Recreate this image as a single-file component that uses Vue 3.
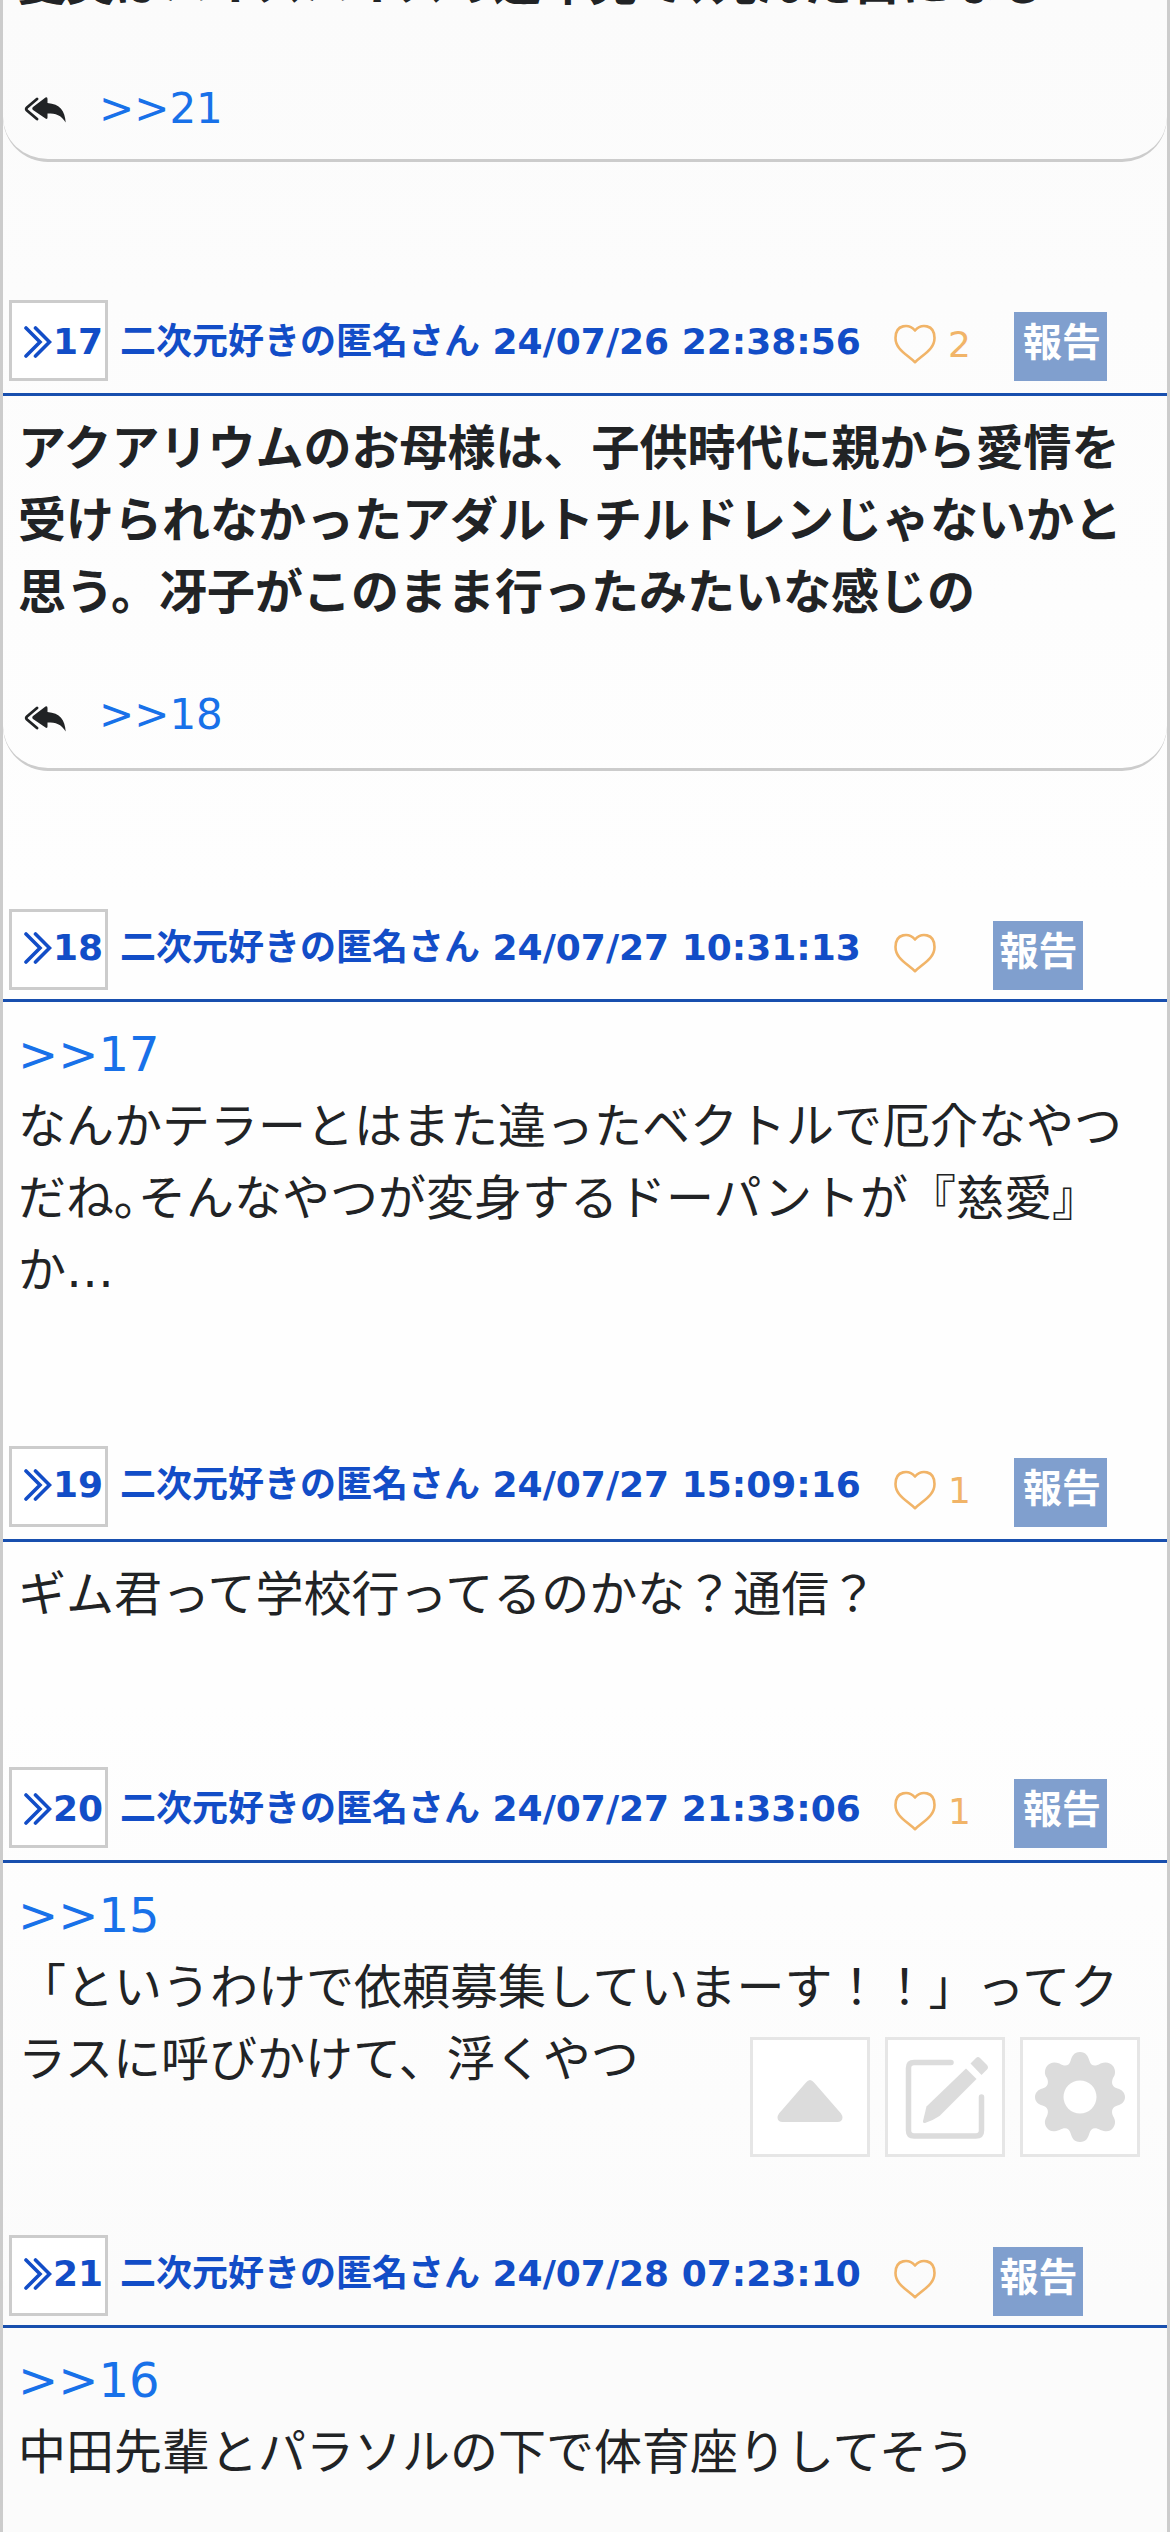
<script setup>
const posts = [
  { no: 17, date: '24/07/26 22:38:56', likes: 2, bold: true, low: true, lines: ['アクアリウムのお母様は、子供時代に親から愛情を', '受けられなかったアダルトチルドレンじゃないかと', '思う。冴子がこのまま行ったみたいな感じの'], reply: '>>18' },
  { no: 18, date: '24/07/27 10:31:13', likes: 0, anchor: '>>17', lines: ['なんかテラーとはまた違ったベクトルで厄介なやつ', 'だね｡そんなやつが変身するドーパントが『慈愛』', 'か…'] },
  { no: 19, date: '24/07/27 15:09:16', likes: 1, tight: true, lines: ['ギム君って学校行ってるのかな？通信？'] },
  { no: 20, date: '24/07/27 21:33:06', likes: 1, low: true, anchor: '>>15', lines: ['「というわけで依頼募集していまーす！！」ってク', 'ラスに呼びかけて、浮くやつ'] },
  { no: 21, date: '24/07/28 07:23:10', likes: 0, anchor: '>>16', lines: ['中田先輩とパラソルの下で体育座りしてそう'] },
]
</script>

<template>
  <main class="thread">
    <section class="card card--first">
      <p class="line bold">夏美はハイスハイスの近年見て､死んだ目になる</p>
      <div class="reply">
        <svg class="reply-icon" viewBox="0 0 42 26"><path d="M13 2 3 10.5Q1.500 12 3 13.500L13 22" fill="none" stroke="currentColor" stroke-width="2.800" stroke-linecap="round" /><path d="M9 10 21.500.6Q23.500-.3 23.500 2V6C36 7 41 14 41.700 25.500 37 18 32 16.500 23.500 16.500V20.500Q23.500 22.600 21.500 21.500L9 13Q7.500 11.500 9 10Z" fill="currentColor" /></svg>
        <a class="link">&gt;&gt;21</a>
      </div>
    </section>

    <article v-for="p in posts" :key="p.no">
      <header class="head" :class="{ low: p.low, liked: p.likes }">
        <div class="number">
          <svg class="chevrons" viewBox="0 0 28 32"><path d="M2 2 16 16 2 30M11.500 2 25.500 16 11.500 30" fill="none" stroke="currentColor" stroke-width="3.600" stroke-linecap="round" /></svg>
          <span>{{ p.no }}</span>
        </div>
        <div class="meta">二次元好きの匿名さん {{ p.date }}</div>
        <svg class="heart" viewBox="0 0 42 40"><path d="M21 6.500C15-.5 1.500 0 1.500 14 1.500 25 12 30 21 38.200 30 30 40.500 25 40.500 14 40.500 0 27-.5 21 6.500Z" fill="none" stroke="currentColor" stroke-width="2.600" stroke-linejoin="round" /></svg>
        <span v-if="p.likes" class="count">{{ p.likes }}</span>
        <button class="report">報告</button>
      </header>
      <div class="body" :class="{ card: p.reply, tight: p.tight }">
        <a v-if="p.anchor" class="line link">{{ p.anchor }}</a>
        <p v-for="l in p.lines" :key="l" class="line" :class="{ bold: p.bold }">{{ l }}</p>
        <div v-if="p.reply" class="reply">
          <svg class="reply-icon" viewBox="0 0 42 26"><path d="M13 2 3 10.500Q1.500 12 3 13.500L13 22" fill="none" stroke="currentColor" stroke-width="2.800" stroke-linecap="round" /><path d="M9 10 21.500.6Q23.500-.3 23.500 2V6C36 7 41 14 41.700 25.500 37 18 32 16.500 23.500 16.500V20.500Q23.500 22.600 21.500 21.500L9 13Q7.500 11.500 9 10Z" fill="currentColor" /></svg>
          <a class="link">{{ p.reply }}</a>
        </div>
      </div>
    </article>

    <nav class="tools">
      <button class="tool"><svg viewBox="0 0 114 114"><path d="M53 42.500Q57 37.500 61 42.500L88 73.500Q91 78 88 81 86.500 82 84.500 82H29.500Q27.500 82 26 81 23 78 26 73.500Z" fill="currentColor" /></svg></button>
      <button class="tool"><svg viewBox="0 0 114 114"><path d="M63 22.500H26Q20.500 22.500 20.500 28V90.500Q20.500 96 26 96H88Q93.500 96 93.500 90.500V57" fill="none" stroke="currentColor" stroke-width="5.500" stroke-linecap="round" /><path d="M78 28.500 88.500 39 51.500 76Q44 81 37 83 34.500 83.500 35 81L38.500 66.500Z" fill="currentColor" /><path d="M82.500 23.500 88 18Q90 16 92 18L99 25Q101 27.500 99 29.500L93.500 35Z" fill="currentColor" /></svg></button>
      <button class="tool"><svg viewBox="0 0 114 114"><path fill-rule="evenodd" fill="currentColor" d="M57 12C63 12 65 16 66.500 21 68 26 72 27 77.500 23.500 83 21.500 87 22.500 90 26 93 30 92.500 35 90 38 88 43 89 47 94.500 48.500 99 49.500 102 53 102 57 102 61 99 64.500 94.500 65.500 89 67 88 71 90 76 92.500 80 93 84 90 88 87 92 83 92 77.500 90 72 87 68 88 66.500 93 65 98 63 102 57 102 51 102 49 98 47.500 93 46 88 42 87 36.500 90 31 92 27 92 24 88 21 84 21.500 80 24 76 26 71 25 67 19.500 65.500 15 64.500 12 61 12 57 12 53 15 49.500 19.500 48.500 25 47 26 43 24 38 21.500 35 21 30 24 26 27 22.500 31 21.500 36.500 23.500 42 27 46 26 47.500 21 49 16 51 12 57 12ZM57 40.500A16.500 16.500 0 1 0 57 73.500 16.500 16.500 0 1 0 57 40.500Z" /></svg></button>
    </nav>
  </main>
</template>

<style>
body { margin: 0; }
</style>

<style scoped>
* { box-sizing: border-box; }
.thread {
  position: relative;
  height: 2532px;
  overflow: hidden;
  border: solid #ccc;
  border-width: 0 3px;
  background: linear-gradient(#fbfbfb, #fefefe 900px, #fefefe 1700px, #fbfbfb 2300px);
  color: #212325;
  font: 48px/72px "DejaVu Sans", "Noto Sans CJK JP", sans-serif;
}
.line { display: block; margin: 0; white-space: nowrap; }
.bold { font-weight: 700; }
.link { color: #1871e9; }
.card {
  border-bottom: 3px solid #ccc;
  border-radius: 0 0 45px 45px;
}
.card--first {
  display: flex;
  flex-direction: column;
  justify-content: flex-end;
  height: 162px;
  margin-bottom: 138px;
  padding: 0 15px 19px;
}
.body { padding: 16px 15px 140px; }
.body.tight { padding-bottom: 137px; }
.body.card { height: 375px; margin-bottom: 138px; padding-bottom: 0; }
.reply {
  display: flex;
  align-items: center;
  gap: 33px;
  height: 63px;
  margin-top: 55px;
  padding-left: 6px;
  font-size: 42px;
  line-height: 63px;
}
.card--first .reply { margin-top: 58px; }
.reply-icon { width: 42px; height: 26px; margin-top: 8px; }
.card--first .reply-icon { margin-top: 3px; }
.head {
  --drop: 0px;
  display: flex;
  align-items: flex-start;
  height: 93px;
  padding-left: 6px;
  border-bottom: 3px solid #184fae;
  color: #124dc7;
  font-size: 36px;
  line-height: 54px;
  font-weight: 700;
  white-space: nowrap;
}
.liked { height: 96px; }
.low { --drop: 3px; }
.number {
  display: flex;
  width: 99px;
  height: 81px;
  margin-right: 12px;
  padding: calc(9px + var(--drop)) 0 0 12px;
  border: 3px solid #ccc;
  background: #fff;
}
.chevrons { flex: none; width: 28px; height: 32px; margin: 11px 1px 0 0; }
.meta { width: 774px; padding-top: calc(12px + var(--drop)); }
.heart { flex: none; width: 42px; height: 40px; margin-top: 24px; color: #f1b468; }
.count {
  width: 23px;
  margin: 18px 0 0 12px;
  color: #f1b468;
  font-weight: 400;
}
.report {
  width: 90px;
  height: 69px;
  margin: 12px 0 0 57px;
  padding: 0 0 8px 1px;
  border: 0;
  background: #809fce;
  color: #fff;
  font: 700 39px/58px "DejaVu Sans", "Noto Sans CJK JP", sans-serif;
}
.count + .report { width: 93px; margin-left: 43px; padding-left: 3px; }
.tools {
  position: absolute;
  top: 2037px;
  right: 27px;
  display: flex;
  gap: 15px;
}
.tool {
  width: 120px;
  height: 120px;
  padding: 0;
  border: 3px solid #e6e6e6;
  background: #fff;
  color: #dcdcdc;
}
.tool svg { display: block; width: 114px; height: 114px; }
</style>
